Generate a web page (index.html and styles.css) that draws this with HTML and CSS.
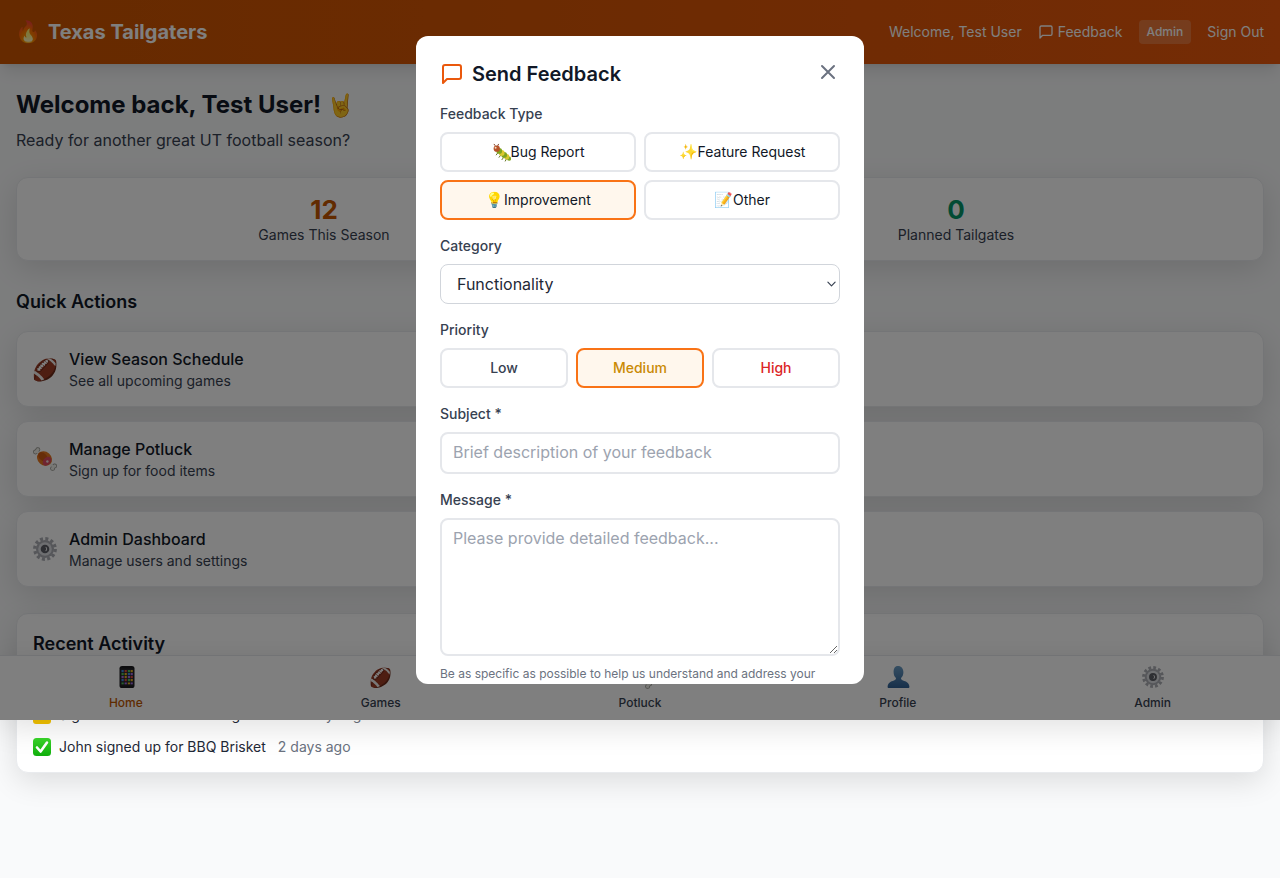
FILE: index.html
```html
<!DOCTYPE html>
<html lang="en">
<head>
<meta charset="utf-8">
<title>Texas Tailgaters</title>
<link rel="stylesheet" href="styles.css">
</head>
<body>
<svg class="defs" aria-hidden="true">
  <defs>
    <linearGradient id="bust" x1="0" y1="0" x2="0" y2="1"><stop offset="0" stop-color="#6a9cc4"/><stop offset="1" stop-color="#2f5f94"/></linearGradient>
    <linearGradient id="tick" x1="0" y1="0" x2="0" y2="1"><stop offset="0" stop-color="#3ad62a"/><stop offset="1" stop-color="#10ae0c"/></linearGradient>
    <symbol id="i-bug" viewBox="0 0 20 20">
      <g stroke="#5c6b1c" stroke-width="1" stroke-linecap="round"><path d="M6 10.500 4.500 12.500M9 13 7.500 15M12 15.500 10.500 17.500M15 17 14 19"/></g>
      <circle cx="18" cy="16.500" r="2.200" fill="#7fa61f"/>
      <circle cx="15.500" cy="14.500" r="2.800" fill="#d7c52c"/>
      <circle cx="12.800" cy="12.500" r="3" fill="#7ea31d"/>
      <circle cx="10.200" cy="10.400" r="3" fill="#dcc92d"/>
      <circle cx="7.600" cy="8.300" r="3" fill="#7ea31d"/>
      <circle cx="5" cy="6" r="3.300" fill="#b8532a"/>
      <circle cx="3.800" cy="5" r="1" fill="#f4e0c0"/>
      <path d="M3.500 3 2 1M6 3 7 1" stroke="#7a3a1a" stroke-width="1" fill="none"/>
    </symbol>
    <symbol id="i-meat" viewBox="0 0 24 24">
      <g fill="#8f8f88"><circle cx="2.500" cy="5" r="2.400"/><circle cx="4.800" cy="2.600" r="2.400"/><circle cx="19.600" cy="21.400" r="2.400"/><circle cx="21.600" cy="19" r="2.400"/></g>
      <g fill="#f0f0ea"><circle cx="2.500" cy="5" r="1.700"/><circle cx="4.800" cy="2.600" r="1.700"/><circle cx="19.600" cy="21.400" r="1.700"/><circle cx="21.600" cy="19" r="1.700"/></g>
      <path d="M3.500 4 20.500 20" stroke="#f0f0ea" stroke-width="2.400" stroke-linecap="round"/>
      <ellipse cx="11.500" cy="11.500" rx="8" ry="6.800" transform="rotate(42 11.500 11.500)" fill="#e8781e"/>
      <ellipse cx="9.800" cy="9.800" rx="5.400" ry="3.600" transform="rotate(42 9.800 9.800)" fill="#cf5a12"/>
      <ellipse cx="14" cy="14.200" rx="5" ry="3.600" transform="rotate(-48 14 14.200)" fill="#de4a62"/>
      <circle cx="14.400" cy="14.500" r="1.200" fill="#f4dede"/>
    </symbol>
    <symbol id="i-gear" viewBox="0 0 24 24">
      <circle cx="12" cy="12" r="10.200" fill="none" stroke="#acaeb5" stroke-width="3.400" stroke-dasharray="3 2.340"/>
      <circle cx="12" cy="12" r="9" fill="#acaeb5"/>
      <circle cx="12" cy="12" r="6.800" fill="#dcdee3"/>
      <circle cx="12" cy="12" r="4.300" fill="#5d5f66"/>
      <path d="M12 9.800a2.200 2.200 0 0 1 0 4.400 3 3 0 0 0 0-4.400" fill="#eeeff2"/>
    </symbol>
    <symbol id="i-person" viewBox="0 0 24 24">
      <path d="M12 1c3.300 0 5.400 2.600 5.400 6.200 0 2.500-1 4.600-2.400 5.900 0 1.300.5 1.900 2 2.500 3.200 1.100 5.800 2 6.400 5.800.1.900-.4 1.600-1.300 1.600H2.900c-.9 0-1.400-.7-1.300-1.600.6-3.800 3.200-4.700 6.400-5.800 1.500-.6 2-1.200 2-2.500-1.400-1.300-2.400-3.400-2.400-5.900C7.600 3.600 8.700 1 12 1z" fill="url(#bust)"/>
    </symbol>
    <symbol id="i-phone" viewBox="0 0 24 24">
      <rect x="4.500" y="1" width="15" height="22" rx="2.600" fill="#1b1b1f"/>
      <rect x="5.500" y="3.500" width="13" height="17" fill="#26262c"/>
      <g fill="#3f8ae0"><rect x="6.500" y="5" width="2.200" height="2.200"/><rect x="12.800" y="8" width="2.200" height="2.200"/><rect x="6.500" y="14" width="2.200" height="2.200"/></g>
      <g fill="#e0483e"><rect x="9.600" y="5" width="2.200" height="2.200"/><rect x="15.600" y="11" width="2.200" height="2.200"/><rect x="9.600" y="14" width="2.200" height="2.200"/></g>
      <g fill="#4cc05a"><rect x="12.800" y="5" width="2.200" height="2.200"/><rect x="6.500" y="8" width="2.200" height="2.200"/><rect x="12.800" y="14" width="2.200" height="2.200"/><rect x="6.500" y="17.500" width="2.200" height="1.800"/></g>
      <g fill="#e6b422"><rect x="15.600" y="5" width="2.200" height="2.200"/><rect x="9.600" y="8" width="2.200" height="2.200"/><rect x="9.600" y="11" width="2.200" height="2.200"/><rect x="15.600" y="14" width="2.200" height="2.200"/><rect x="12.800" y="17.500" width="2.200" height="1.800"/></g>
      <g fill="#a56be0"><rect x="15.600" y="8" width="2.200" height="2.200"/><rect x="6.500" y="11" width="2.200" height="2.200"/><rect x="12.800" y="11" width="2.200" height="2.200"/><rect x="9.600" y="17.500" width="2.200" height="1.800"/><rect x="15.600" y="17.500" width="2.200" height="1.800"/></g>
    </symbol>
    <symbol id="i-check" viewBox="0 0 18 18">
      <rect x="0" y="0" width="18" height="18" rx="3.500" fill="url(#tick)"/>
      <path d="M4 9.500 7.600 13.500 14 4.500" fill="none" stroke="#fff" stroke-width="2.600" stroke-linecap="round" stroke-linejoin="round"/>
    </symbol>
    <symbol id="i-note" viewBox="0 0 18 18">
      <rect x="0" y="0" width="18" height="18" rx="3" fill="#f2c200"/>
    </symbol>
  </defs>
</svg>
<header class="topbar">
  <div class="brand"><span class="emoji emoji-24">🔥</span><span>Texas Tailgaters</span></div>
  <nav class="top-links">
    <span>Welcome, Test User</span>
    <span class="fb-link">
      <svg class="fb-icon" viewBox="0 0 24 24" fill="none" stroke="currentColor" stroke-width="2" stroke-linecap="round" stroke-linejoin="round"><path d="M21 15a2 2 0 0 1-2 2H7l-4 4V5a2 2 0 0 1 2-2h14a2 2 0 0 1 2 2z"/></svg>
      Feedback</span>
    <span class="badge">Admin</span>
    <span>Sign Out</span>
  </nav>
</header>
<main class="content">
  <h1 class="welcome">Welcome back, Test User! <span class="hand">🤘</span></h1>
  <p class="tagline">Ready for another great UT football season?</p>
  <section class="card stats">
    <div class="stat"><div class="num orange">12</div><div class="stat-label">Games This Season</div></div>
    <div class="stat"><div class="num green">0</div><div class="stat-label">Planned Tailgates</div></div>
  </section>
  <h2 class="section-title">Quick Actions</h2>
  <div class="actions">
    <a class="card action"><span class="emoji emoji-24">🏈</span><span><span class="action-title">View Season Schedule</span><span class="action-sub">See all upcoming games</span></span></a>
    <a class="card action"><svg class="icon-24"><use href="#i-meat"/></svg><span><span class="action-title">Manage Potluck</span><span class="action-sub">Sign up for food items</span></span></a>
    <a class="card action"><svg class="icon-24"><use href="#i-gear"/></svg><span><span class="action-title">Admin Dashboard</span><span class="action-sub">Manage users and settings</span></span></a>
  </div>
  <section class="card recent">
    <h2 class="recent-title">Recent Activity</h2>
    <div class="rows">
      <div class="row"><svg class="icon-18"><use href="#i-check"/></svg><span class="row-text">Sarah added Texas Chili</span><span class="row-time">1 day ago</span></div>
      <div class="row"><svg class="icon-18"><use href="#i-note"/></svg><span class="row-text">Sign the banner at the Tailgate Inn</span><span class="row-time">3 days ago</span></div>
      <div class="row"><svg class="icon-18"><use href="#i-check"/></svg><span class="row-text">John signed up for BBQ Brisket</span><span class="row-time">2 days ago</span></div>
    </div>
  </section>
</main>
<nav class="bottom-nav">
  <div class="tab active"><svg class="tab-svg tab-phone"><use href="#i-phone"/></svg><span>Home</span></div>
  <div class="tab"><span class="tab-emoji">🏈</span><span>Games</span></div>
  <div class="tab"><svg class="tab-svg"><use href="#i-meat"/></svg><span>Potluck</span></div>
  <div class="tab"><svg class="tab-svg"><use href="#i-person"/></svg><span>Profile</span></div>
  <div class="tab"><svg class="tab-svg tab-gear"><use href="#i-gear"/></svg><span>Admin</span></div>
</nav>
<div class="overlay">
  <div class="modal">
    <div class="modal-head">
      <div class="modal-title">
        <svg class="title-icon" viewBox="0 0 24 24" fill="none" stroke="currentColor" stroke-width="2" stroke-linecap="round" stroke-linejoin="round"><path d="M21 15a2 2 0 0 1-2 2H7l-4 4V5a2 2 0 0 1 2-2h14a2 2 0 0 1 2 2z"/></svg>
        <span>Send Feedback</span>
      </div>
      <svg class="close" viewBox="0 0 24 24" fill="none" stroke="currentColor" stroke-width="2" stroke-linecap="round" stroke-linejoin="round"><path d="M18 6 6 18M6 6l12 12"/></svg>
    </div>
    <label class="field-label">Feedback Type</label>
    <div class="opt-grid two">
      <button class="opt"><svg class="icon-19"><use href="#i-bug"/></svg><span>Bug Report</span></button>
      <button class="opt"><span class="opt-emoji">✨</span><span>Feature Request</span></button>
      <button class="opt selected"><span class="opt-emoji">💡</span><span>Improvement</span></button>
      <button class="opt"><span class="opt-emoji">📝</span><span>Other</span></button>
    </div>
    <label class="field-label">Category</label>
    <div class="select-wrap">
      <select class="select"><option>Functionality</option></select>
      <svg class="chevron" viewBox="0 0 10 6" fill="none" stroke="currentColor" stroke-width="1.300" stroke-linecap="round" stroke-linejoin="round"><path d="M1 1l4 4 4-4"/></svg>
    </div>
    <label class="field-label">Priority</label>
    <div class="opt-grid three">
      <button class="opt strong low">Low</button>
      <button class="opt strong selected medium">Medium</button>
      <button class="opt strong high">High</button>
    </div>
    <label class="field-label">Subject *</label>
    <input class="input" placeholder="Brief description of your feedback">
    <label class="field-label">Message *</label>
    <textarea class="textarea" placeholder="Please provide detailed feedback..."></textarea>
    <p class="help">Be as specific as possible to help us understand and address your feedback.</p>
  </div>
</div>
</body>
</html>
```
FILE: styles.css
```css
* { box-sizing: border-box; }
html, body { margin: 0; padding: 0; }
body {
  font-family: Inter, "Noto Sans", sans-serif;
  background: #f9fafb;
  color: #111827;
  min-height: 878px;
  position: relative;
  overflow: hidden;
}
.defs { width: 0; height: 0; display: block; }
.emoji { display: inline-flex; align-items: center; justify-content: center; flex: none; }
.emoji-24 { width: 24px; height: 32px; font-size: 21px; font-weight: 400; }
.icon-24 { width: 24px; height: 24px; flex: none; }
.icon-19 { width: 19px; height: 19px; flex: none; }
.icon-18 { width: 18px; height: 18px; flex: none; }
.topbar {
  height: 64px;
  padding: 0 16px;
  display: flex;
  align-items: center;
  justify-content: space-between;
  background: linear-gradient(90deg, #cc5500, #ea580c);
  color: #fff;
  box-shadow: 0 10px 15px -3px rgba(0,0,0,.1), 0 4px 6px -4px rgba(0,0,0,.1);
}
.brand { display: flex; align-items: center; gap: 8px; font-size: 20px; font-weight: 700; line-height: 28px; }
.top-links { display: flex; align-items: center; gap: 16px; font-size: 14px; line-height: 20px; }
.fb-link { display: flex; align-items: center; gap: 4px; }
.fb-icon { width: 16px; height: 16px; }
.badge { background: rgba(255,255,255,.2); border-radius: 4px; padding: 4px 8px; font-size: 12px; line-height: 16px; font-weight: 500; }
.content { padding: 25px 16px 0; }
.welcome { margin: 0; font-size: 24px; line-height: 32px; font-weight: 700; }
.hand { font-size: 22px; font-weight: 400; line-height: 0; }
.tagline { margin: 7px 0 25px; font-size: 16px; line-height: 24px; color: #374151; }
.card {
  background: #fff;
  border: 1px solid #e9ebee;
  border-radius: 12px;
  box-shadow: 0 8px 30px rgba(0,0,0,.12);
}
.stats { height: 84px; padding: 15px; display: grid; grid-template-columns: 1fr 1fr; gap: 48px; text-align: center; }
.num { font-size: 26px; line-height: 32px; font-weight: 700; margin: 1px 0 -1px; }
.orange { color: #c45600; }
.green { color: #059669; }
.stat-label { font-size: 14px; line-height: 20px; color: #374151; }
.section-title { margin: 27px 0 15px; font-size: 18px; line-height: 28px; font-weight: 600; }
.actions { display: flex; flex-direction: column; gap: 14px; }
.action { height: 76px; padding: 0 16px; display: flex; align-items: center; gap: 12px; }
.action-title { display: block; font-size: 16px; line-height: 24px; font-weight: 500; }
.action-sub { display: block; font-size: 14px; line-height: 20px; color: #374151; }
.recent { margin-top: 26px; padding: 16px 16px 15px; }
.recent-title { margin: 0 0 15px; font-size: 18px; line-height: 28px; font-weight: 600; }
.rows { display: flex; flex-direction: column; gap: 12px; }
.row { display: flex; align-items: center; gap: 8px; font-size: 14px; line-height: 20px; }
.row-text { color: #1f2937; }
.row-time { color: #6b7280; margin-left: 4px; }
.bottom-nav {
  position: absolute;
  left: 0;
  right: 0;
  top: 655px;
  height: 65px;
  background: #fff;
  border-top: 1px solid #e5e7eb;
  display: flex;
  justify-content: space-around;
  box-shadow: 0 8px 30px rgba(0,0,0,.12);
}
.tab { display: flex; flex-direction: column; align-items: center; padding-top: 8px; font-size: 12px; line-height: 16px; font-weight: 500; color: #374151; }
.tab.active { color: #bf5700; }
.tab-svg { width: 24px; height: 24px; margin: 1px 0 6px; flex: none; }
.tab-phone { margin-left: 3px; }
.tab-gear { width: 22px; height: 22px; margin: 2px 0 7px 1px; }
.tab-emoji { height: 26px; line-height: 26px; font-size: 18.5px; margin-bottom: 5px; font-weight: 400; }
.overlay {
  position: absolute;
  left: 0;
  right: 0;
  top: 0;
  height: 720px;
  background: rgba(0,0,0,.5);
  display: flex;
  align-items: center;
  justify-content: center;
}
.modal {
  width: 448px;
  height: 648px;
  padding: 24px;
  background: #fff;
  border-radius: 12px;
  overflow: hidden;
}
.modal-head { display: flex; align-items: center; justify-content: space-between; height: 28px; margin-bottom: 16px; }
.modal-title { display: flex; align-items: center; gap: 8px; font-size: 20px; line-height: 28px; font-weight: 600; color: #111827; }
.title-icon { width: 24px; height: 24px; color: #ea580c; }
.close { width: 24px; height: 24px; color: #6b7280; margin-top: -4px; }
.field-label { display: block; font-size: 14px; line-height: 20px; font-weight: 500; color: #374151; margin-bottom: 8px; }
.opt-grid { display: grid; gap: 8px; margin-bottom: 16px; }
.two { grid-template-columns: 1fr 1fr; }
.three { grid-template-columns: 1fr 1fr 1fr; }
.opt {
  height: 40px;
  background: #fff;
  border: 2px solid #e5e7eb;
  border-radius: 8px;
  font: 400 14px/20px Inter, sans-serif;
  color: #111827;
  display: flex;
  align-items: center;
  justify-content: center;
  padding: 0;
}
.opt-emoji { font-size: 15px; }
.strong { font-weight: 500; }
.low { color: #374151; }
.medium { color: #ca8a04; }
.high { color: #dc2626; }
.opt.selected { border-color: #f97316; background: #fff7ed; }
.select-wrap { position: relative; margin-bottom: 16px; }
.select {
  display: block;
  width: 100%;
  height: 40px;
  border: 1px solid #d1d5db;
  border-radius: 8px;
  background: #fff;
  font: 400 16px Inter, sans-serif;
  color: #1f2937;
  padding: 0 16px;
  appearance: none;
}
.chevron { position: absolute; right: 4px; top: 17px; width: 9px; height: 6px; color: #374151; pointer-events: none; }
.input, .textarea {
  display: block;
  width: 100%;
  border: 2px solid #e5e7eb;
  border-radius: 8px;
  font: 400 16px/24px Inter, sans-serif;
  padding: 6px 11px 8px;
  background: #fff;
  color: #111827;
  margin: 0;
}
.input { height: 42px; margin-bottom: 16px; }
.textarea { height: 138px; resize: vertical; }
.input::placeholder, .textarea::placeholder { color: #9ca3af; opacity: 1; }
.help { margin: 10px 0 0; font-size: 12px; line-height: 16px; color: #6b7280; }
```
